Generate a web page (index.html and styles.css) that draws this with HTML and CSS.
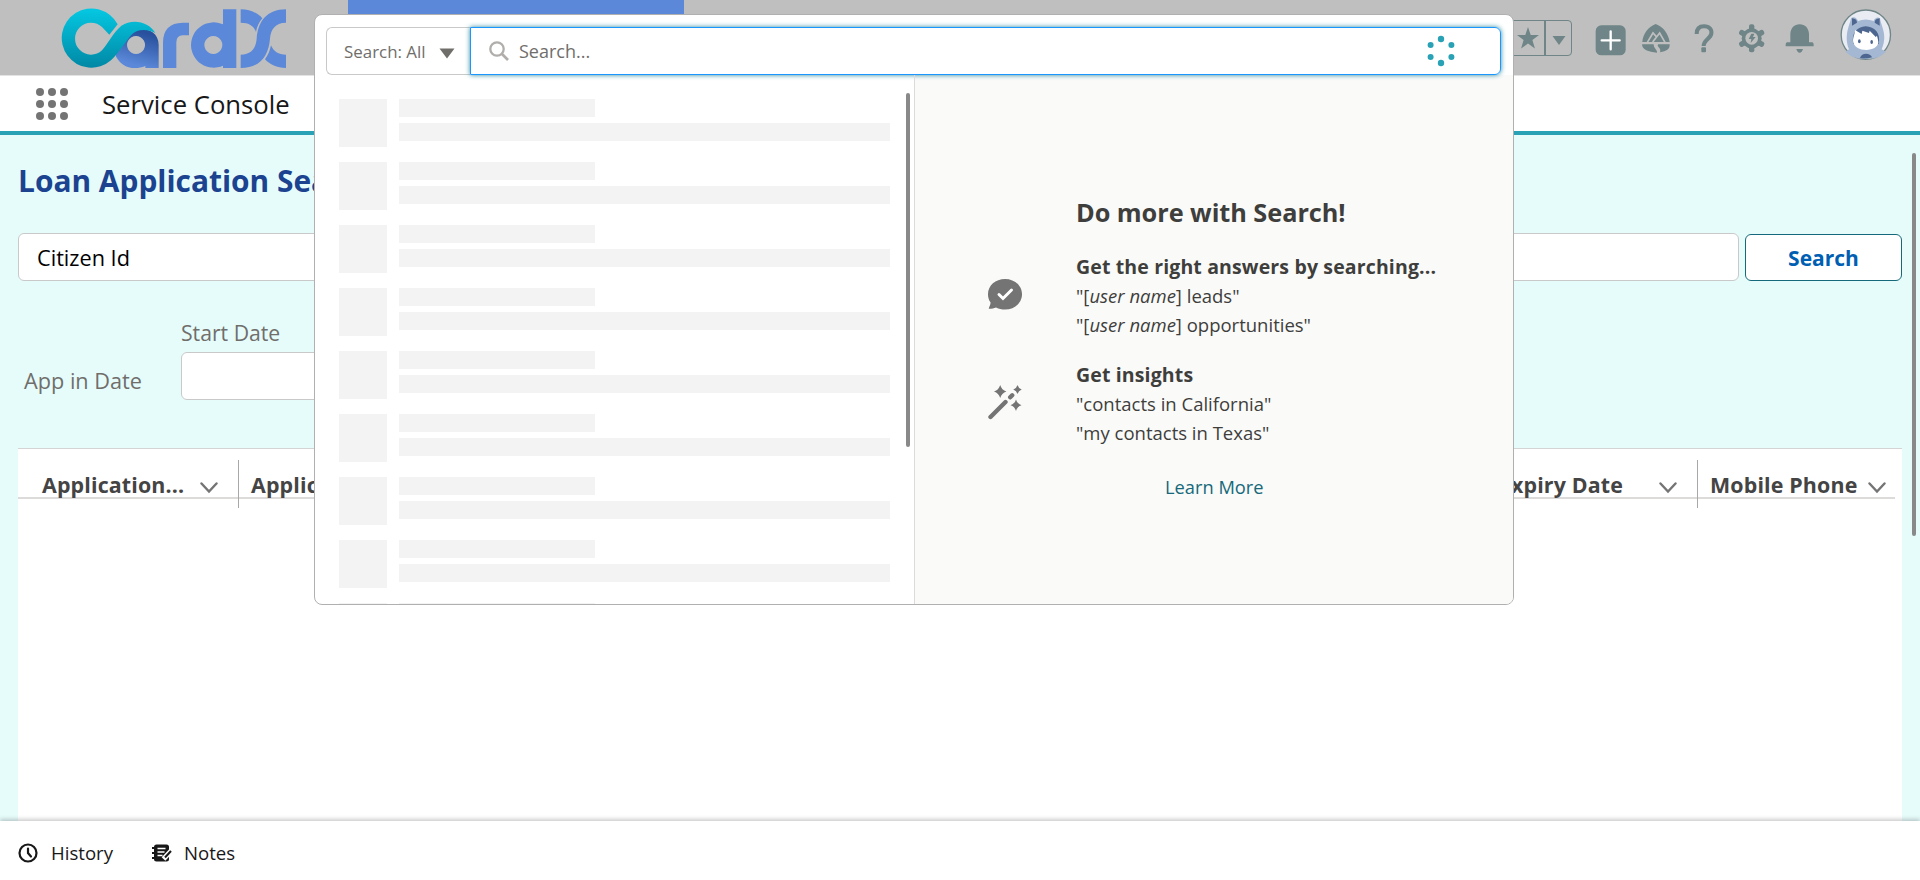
FILE: index.html
```html
<!DOCTYPE html>
<html lang="en">
<head>
<meta charset="utf-8">
<title>Service Console</title>
<link rel="stylesheet" href="styles.css">
</head>
<body>
<div class="app">
  <header class="topbar">
    <svg class="logo" viewBox="180 20 690 190">
      <defs>
        <linearGradient id="teal" x1="0" y1="0" x2="0" y2="1"><stop offset="0" stop-color="#05c8e2"/><stop offset="1" stop-color="#0088a5"/></linearGradient>
        <linearGradient id="navy" x1="0.300" y1="0" x2="0" y2="1"><stop offset="0" stop-color="#28509c"/><stop offset=".8" stop-color="#5b88d9"/></linearGradient>
      </defs>
      <path fill="url(#navy)" fill-rule="evenodd" d="M345 160C352 115 375 80 415 84C450 86 476 100 476 134V203H436V197C400 212 358 200 345 160ZM408 107a27 27 0 1 0 .1 0Z"/>
      <path fill="url(#teal)" d="M353 72A89 89 0 1 0 333 180C358 156 377 124 393 105C408 87 440 84 466 98C447 64 398 54 364 76C340 96 327 125 306 150A48 48 0 1 1 306 80L328 103Z"/>
      <g fill="#5b88d9">
        <path d="M567 67V105H548Q529 106 529 126V203H489V126Q490 68 548 67Z"/>
        <path fill-rule="evenodd" d="M669 27H709V203H669V196A68 68 0 1 1 669 72ZM640 107a27 27 0 1 0 .1 0Z"/>
        <path d="M858 27V67C825 67 812 88 810 115C806 166 780 203 722 203V163C755 163 768 142 770 115C774 64 800 27 858 27Z"/>
        <path d="M722 27C750 27 772 37 787 54C777 66 771 79 768 95C762 77 747 67 722 67Z"/>
        <path d="M858 203C830 203 810 193 795 177C804 165 810 151 813 135C820 153 835 163 858 163Z"/>
      </g>
    </svg>
    <div class="tools">
      <div class="fav">
        <span class="fav-star"><svg width="24" height="24" viewBox="0 0 24 24"><path d="M12 1l2.700 8H23l-6.600 5 2.500 8.500L12 17.500 5.100 22.500 7.600 14 1 9h8.300z"/></svg></span>
        <span class="fav-more"><svg width="14" height="9" viewBox="0 0 14 9"><path d="M.5 0h13L7 9z"/></svg></span>
      </div>
      <svg class="icons" viewBox="40 20 900 165">
        <rect x="48" y="75" width="90" height="90" rx="17"/>
        <path d="M93 93v54M66 120h54" stroke="#fff" stroke-width="7" stroke-linecap="round"/>
        <path d="M228 71C207 79 190 99 188 125H270C266 99 250 79 228 71ZM187 132C187 148 206 155 232 157C234 149 222 145 222 132ZM270 132H236C228 138 247 143 241 156C260 152 271 147 270 132Z"/>
        <path d="M203 126L220 98L230 109M219 125L240 98L256 126" fill="none" stroke="#bfbfbf" stroke-width="5"/>
        <path d="M351 101C351 86 359 78 373 78C389 78 397 87 395 100C393 115 372 119 372 137" fill="none" stroke="#6f8587" stroke-width="12"/>
        <rect x="365" y="141" width="14" height="15" rx="3"/>
        <g transform="translate(516 114)"><rect x="-8" y="-42" width="16" height="84" rx="6"/><rect x="-8" y="-42" width="16" height="84" rx="6" transform="rotate(60)"/><rect x="-8" y="-42" width="16" height="84" rx="6" transform="rotate(120)"/><circle r="30"/><circle r="19" fill="#bfbfbf"/><path d="M-1-14h9l-4 10h8L-3 14l2-12h-8z"/></g>
        <path d="M632 126V101C633 83 644 72 660 72C676 72 687 83 688 101V126H698Q702 127 702 133V138H618V133Q618 127 622 126ZM650 146H670Q667 157 660 157Q653 157 650 146Z"/>
        <circle cx="858.500" cy="103" r="74" fill="#e9edf3" stroke="#6f8587" stroke-width="4"/>
        <path d="M808 147C791 103 812 72 814 53C824 47 833 55 835 62Q858 53 882 62C885 52 895 48 901 54C903 75 926 105 906 147L919 154Q895 179 858 175Q822 178 797 154Z" fill="#a5b8d3"/>
        <path d="M817 54Q832 55 832 67L817 76ZM900 54Q885 55 885 67L900 76ZM821 131C814 99 832 80 858 78C886 79 904 99 897 131ZM841 173C845 156 872 156 877 171Q858 177 841 173Z" fill="#4c6690"/>
        <path d="M820 121C821 106 826 101 826 89L846 101L848 91L868 98L870 91L889 111Q892 96 896 126C894 157 822 157 820 121Z" fill="#fff"/>
        <g fill="#4c6690"><ellipse cx="839" cy="123" rx="4" ry="6"/><ellipse cx="876" cy="125" rx="4" ry="6"/></g>
      </svg>
    </div>
  </header>

  <nav class="navbar">
    <div class="launcher"><i></i><i></i><i></i><i></i><i></i><i></i><i></i><i></i><i></i></div>
    <span class="app-name">Service Console</span>
  </nav>

  <main class="content">
    <h1 class="page-title">Loan Application Search</h1>
    <div class="search-row">
      <div class="field select"><span>Citizen Id</span></div>
      <button class="btn"><span>Search</span></button>
    </div>
    <div class="date-row">
      <span class="date-name">App in Date</span>
      <div class="date-field"><label>Start Date</label><div class="field"></div></div>
    </div>
    <section class="table">
      <div class="thead">
        <div class="th c1"><span>Application...</span><svg class="chev" viewBox="0 0 18 12"><path d="M1.500 1.500L9 9.500l7.500-8"/></svg></div>
        <div class="th c2"><span>Application...</span></div>
        <div class="th c3"><span>Expiry Date</span><svg class="chev" viewBox="0 0 18 12"><path d="M1.500 1.500L9 9.500l7.500-8"/></svg></div>
        <div class="th c4"><span>Mobile Phone</span><svg class="chev" viewBox="0 0 18 12"><path d="M1.500 1.500L9 9.500l7.500-8"/></svg></div>
      </div>
    </section>
    <div class="page-thumb"></div>
  </main>

  <footer class="utility">
    <svg class="u-icon" width="20" height="20" viewBox="0 0 20 20"><circle cx="10" cy="10" r="8.500" fill="none" stroke="#181818" stroke-width="2.200"/><path d="M10 5.500V10l3 3.500" fill="none" stroke="#181818" stroke-width="2.200" stroke-linecap="round"/></svg>
    <span class="u-history">History</span>
    <svg class="u-icon" width="20" height="20" viewBox="0 0 20 20"><rect x="2" y="1.500" width="15" height="17" rx="2.500" fill="#181818"/><path d="M0 5h3M0 10h3M0 15h3" stroke="#181818" stroke-width="2"/><path d="M5.500 5.500h8M5.500 9h7M5.500 12.500h5" stroke="#fff" stroke-width="1.300"/><path d="M19 8l-7.500 8" stroke="#fff" stroke-width="5"/><path d="M19 8l-6 6.500" stroke="#181818" stroke-width="2"/></svg>
    <span class="u-notes">Notes</span>
  </footer>

  <div class="dialog">
    <div class="dialog-bar">
      <div class="scope"><span>Search: All</span><svg width="16" height="11" viewBox="0 0 16 11"><path d="M.5.5h15L8 10.500z" fill="#706e6b"/></svg></div>
      <div class="query">
        <svg width="20" height="20" viewBox="0 0 20 20"><circle cx="8" cy="8" r="6.700" fill="none" stroke="#b0adab" stroke-width="2.300"/><path d="M12.500 12.500L19 19" stroke="#b0adab" stroke-width="2.600"/></svg>
        <span>Search...</span>
        <svg class="spinner" width="30" height="32" viewBox="-15 -16 30 32" fill="#2aa2b5"><circle cy="-12" r="3.200"/><circle cy="12" r="3.200"/><circle cx="-10.400" cy="-6" r="3"/><circle cx="10.400" cy="-6" r="3"/><circle cx="-10.400" cy="6" r="3"/><circle cx="10.400" cy="6" r="3"/></svg>
      </div>
    </div>
    <div class="dialog-body">
      <div class="results">
        <div class="skel"><b></b><p></p><p></p></div>
        <div class="skel"><b></b><p></p><p></p></div>
        <div class="skel"><b></b><p></p><p></p></div>
        <div class="skel"><b></b><p></p><p></p></div>
        <div class="skel"><b></b><p></p><p></p></div>
        <div class="skel"><b></b><p></p><p></p></div>
        <div class="skel"><b></b><p></p><p></p></div>
        <div class="skel"><b></b><p></p><p></p></div>
        <div class="skel"><b></b><p></p><p></p></div>
        <div class="results-thumb"></div>
      </div>
      <aside class="tips">
        <h2><span>Do more with Search!</span></h2>
        <div class="tip">
          <svg width="34" height="34" viewBox="0 0 34 34"><path d="M17 2C26.500 2 34 8.500 34 17.200S26.500 32.500 17 32.500C13.500 32.500 11 32 8 30.500C6 31.500 4 31.700 1 31.700C0 31.500 2.600 28.500 2.600 25.500C.5 22.500 0 20 0 17.200C0 8.500 7.500 2 17 2Z" fill="#747474"/><path d="M11 17.500l4 4 8.500-8.500" fill="none" stroke="#fff" stroke-width="3" stroke-linecap="round"/></svg>
          <div class="tip-text"><strong>Get the right answers by searching...</strong><span>"[<em>user name</em>] leads"</span><span>"[<em>user name</em>] opportunities"</span></div>
        </div>
        <div class="tip tip-b">
          <svg width="34" height="36" viewBox="0 0 34 36" fill="#747474"><path d="M2.500 33L17.500 18M22.200 13.300l2-2" stroke="#747474" stroke-width="4.400" stroke-linecap="round"/><path d="M12.200 1q1.500 5 6.200 6.500q-4.700 1.500-6.200 6.500q-1.500-5-6.200-6.500q4.700-1.500 6.200-6.500zM29.500 1q1 3.500 4.200 4.500q-3.200 1-4.200 4.500q-1-3.500-4.200-4.500q3.200-1 4.200-4.500zM28 15.500q1.300 4.400 5.500 5.700q-4.200 1.300-5.500 5.700q-1.300-4.400-5.500-5.700q4.200-1.300 5.500-5.700z"/></svg>
          <div class="tip-text"><strong>Get insights</strong><span>"contacts in California"</span><span>"my contacts in Texas"</span></div>
        </div>
        <a class="learn"><span>Learn More</span></a>
      </aside>
    </div>
  </div>
</div>
</body>
</html>
```
FILE: styles.css
```css
* { box-sizing: border-box; }
body { margin: 0; font-family: "Open Sans", "Noto Sans", sans-serif; color: #3e3e3c; overflow: hidden; }
svg { flex: none; display: block; }
span, strong, label { white-space: nowrap; }
.app { position: relative; width: 1920px; height: 880px; display: flex; flex-direction: column; background: #fff; }

.topbar { height: 76px; flex: none; background: #bfbfbf linear-gradient(90deg, #5b88d9, #5b88d9) 348px 0 / 336px 14px no-repeat; border-bottom: 1px solid #e3e3e3; display: flex; justify-content: space-between; }
.logo { width: 230px; height: 63.33px; margin: 6.67px 0 0 60px; }
.tools { display: flex; padding-right: 26.7px; fill: #6f8587; }
.fav { display: flex; height: 36px; margin: 20px 21.300px 0 0; border: 1px solid #6f8587; border-radius: 4px; }
.fav-star { width: 37px; display: flex; align-items: center; justify-content: center; padding-left: 2px; border-right: 2px solid #6f8587; }
.fav-more { width: 25px; display: flex; align-items: center; justify-content: center; padding-top: 5px; }
.icons { width: 300px; height: 55px; margin-top: 6.67px; }

.navbar { height: 59px; flex: none; display: flex; align-items: center; gap: 34px; padding-left: 36px; border-bottom: 4px solid #2aa2b5; background: #fff; }
.launcher { display: grid; grid-template-columns: repeat(3, 8px); gap: 4px; }
.launcher i { width: 8px; height: 8px; border-radius: 50%; background: #747474; }
.app-name { font-size: 25.700px; line-height: 36px; padding-top: 3px; color: #181818; }

.content { position: relative; flex: 1; background: #e6fcfb; padding: 24px 18px 0; display: flex; flex-direction: column; min-height: 0; }
.page-title { margin: 0 0 30px; height: 44px; line-height: 44px; font-size: 29.900px; font-weight: 700; color: #1b4390; }
.search-row { display: flex; gap: 6px; align-items: flex-end; height: 48px; }
.field { height: 48px; background: #fff; border: 1px solid #c9c9c9; border-radius: 6px; }
.select { flex: 1; display: flex; align-items: center; padding-left: 18px; font-size: 21.700px; color: #000; }
.btn { width: 157px; height: 47px; padding: 1px 0 0; border: 1px solid #16697a; border-radius: 6px; background: #fff; font: 700 21px/44px "Open Sans", sans-serif; color: #005fb2; }
.date-row { display: flex; height: 119px; align-items: flex-end; font-size: 21.200px; color: #706e6b; }
.date-name { width: 163px; padding-left: 6px; font-size: 21.700px; line-height: 28px; margin-bottom: 5px; }
.date-field { width: 340px; display: flex; flex-direction: column; gap: 5px; }
.date-field label { line-height: 28px; }
.table { flex: 1; margin-top: 48px; border-top: 1px solid #d4d4d4; background: #fff; }
.thead { height: 50px; width: 1877px; border-bottom: 2px solid #dddbda; display: grid; grid-template-columns: 221px 400px 1fr 197px; }
.th { height: 48px; margin-top: 11px; border-right: 1px solid #a8a8a8; display: flex; align-items: center; justify-content: space-between; font-size: 21.400px; letter-spacing: .15px; font-weight: 700; color: #444; padding-top: 1px; }
.c1 { padding-right: 20px; padding-left: 24px; }
.c2 { padding-left: 12px; border-right: 0; }
.c3 { padding-right: 20px; justify-content: flex-end; gap: 36px; }
.c4 { padding-right: 9px; padding-left: 12px; border-right: 0; }
.chev { width: 18px; height: 12px; margin-top: 7px; fill: none; stroke: #747474; stroke-width: 2.400; stroke-linecap: round; }
.page-thumb { position: absolute; left: 1912px; top: 18px; width: 4px; height: 383px; border-radius: 2px; background: #898989; }

.utility { position: relative; height: 59px; flex: none; background: #fff; box-shadow: 0 -2px 4px rgba(0,0,0,.2); display: flex; align-items: center; padding: 3px 0 0 18px; font-size: 18.600px; color: #181818; }
.u-icon { margin-top: 1px; }
.u-history { margin-left: 13px; width: 101px; }
.u-notes { margin-left: 12px; }

.dialog { position: absolute; left: 314px; top: 14px; width: 1200px; height: 591px; border: 1px solid #b0b0b0; border-radius: 8px; background: #fff; overflow: hidden; display: flex; flex-direction: column; }
.dialog-bar { display: flex; flex: none; padding: 12px 12px 0 11px; height: 60px; position: relative; }
.scope { width: 144px; height: 48px; border: 1px solid #c9c9c9; border-right: 0; border-radius: 6px 0 0 6px; display: flex; align-items: center; justify-content: space-between; padding: 0 15px 0 17px; font-size: 16.900px; color: #706e6b; }
.scope svg { margin-top: 5px; }
.query { flex: 1; height: 48px; border: 1px solid #1b96ff; border-radius: 0 6px 6px 0; box-shadow: 0 0 5px #2a8aa0; display: flex; align-items: center; padding-left: 18px; gap: 10px; font-size: 18px; color: #706e6b; }
.spinner { margin-left: auto; margin-right: 44px; }
.dialog-body { display: flex; flex: 1; min-height: 0; }
.results { position: relative; width: 600px; border-right: 1px solid #dddbda; padding: 24px 24px 0; overflow: hidden; }
.skel { display: grid; grid-template: 18px 18px / 48px 1fr; column-gap: 12px; row-gap: 6px; height: 63px; }
.skel b { grid-row: 1 / 3; height: 48px; background: #f3f3f3; }
.skel p { margin: 0; background: #f3f3f3; }
.skel p:nth-child(2) { width: 196px; }
.results-thumb { position: absolute; left: 591px; top: 18px; width: 4px; height: 354px; border-radius: 2px; background: #898989; }
.tips { flex: 1; background: #fafaf9; padding: 117px 0 0 73px; }
.tips h2 { margin: 0 0 20px 88px; height: 40px; line-height: 40px; font-size: 25.300px; letter-spacing: -.05px; font-weight: 700; }
.tip { display: flex; gap: 54px; align-items: center; height: 87px; }
.tip svg { margin-bottom: 4px; }
.tip-b { margin-top: 21px; }
.tip-text { display: flex; flex-direction: column; font-size: 18.500px; line-height: 29px; align-items: flex-start; }
.tip-text strong { font-size: 19.500px; letter-spacing: .14px; }
.learn { display: flex; margin: 26px 0 0 177px; font-size: 18.300px; line-height: 28px; color: #16697a; }
```
